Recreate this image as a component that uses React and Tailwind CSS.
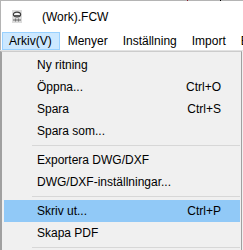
import React from "react";

const Item = ({ label, shortcut, active }) => (
  <div
    className={`h-[22px] flex items-center justify-between pl-[33px] pr-[19px] ${
      active ? "bg-[#91c9f7]" : ""
    }`}
  >
    <span>{label}</span>
    {shortcut && <span>{shortcut}</span>}
  </div>
);

const Sep = () => (
  <div className="h-[7px] flex items-center pl-[28px]">
    <div className="h-px w-full bg-[#d7d7d7]" />
  </div>
);

export default function App() {
  return (
    <div
      className="relative w-[243px] h-[250px] overflow-hidden bg-[#f0f0f0] text-[12px] text-black"
      style={{ fontFamily: '"Liberation Sans", Arial, sans-serif' }}
    >
      {/* top edge */}
      <div className="h-px bg-[#b4b4b4] relative">
        <div className="absolute left-[187px] top-0 w-px h-px bg-[#8b1a2a]" />
        <div className="absolute left-[220px] top-0 w-px h-px bg-black" />
      </div>
      {/* title bar */}
      <div className="h-[30px] bg-white flex items-center border-l border-[#b4b4b4]">
        <svg width="10" height="13" viewBox="0 0 10 13" className="ml-[11px] mt-[1px]">
          <rect x="0" y="0" width="10" height="13" fill="#dcdcdc" />
          <ellipse cx="5" cy="4.5" rx="3.6" ry="2.4" fill="#f4f4f4" stroke="#3a3a3a" strokeWidth="1.2" />
          <rect x="2" y="5" width="6" height="1.5" fill="#555" />
          <line x1="1" y1="10" x2="9" y2="10" stroke="#666" strokeWidth="1" />
          <line x1="3.5" y1="8.5" x2="3.5" y2="11.5" stroke="#777" strokeWidth="1" />
          <line x1="6.5" y1="8.5" x2="6.5" y2="11.5" stroke="#777" strokeWidth="1" />
        </svg>
        <span className="ml-[20px] text-[12px] leading-none mt-[2px]">(Work).FCW</span>
      </div>
      {/* menu bar */}
      <div className="h-[19px] bg-white flex items-start border-l border-[#b4b4b4] whitespace-nowrap">
        <div className="ml-px mt-px h-[18px] pl-[6px] pr-[7px] flex items-center bg-[#cce8ff] border border-[#99d1ff]">
          Arkiv(V)
        </div>
        <div className="h-[19px] px-[8px] flex items-center">Menyer</div>
        <div className="h-[19px] px-[7px] flex items-center">Inställning</div>
        <div className="h-[19px] px-[8px] flex items-center">Import</div>
        <div className="h-[19px] px-[7px] flex items-center">E</div>
      </div>
      <div className="h-px bg-[#e3e3e3]" />
      {/* dropdown */}
      <div className="absolute left-0 top-[51px] w-[242px] h-[210px] bg-[#f0f0f0] border-l-2 border-r border-t border-[#a0a0a0] border-t-[#cccccc] pt-[2px] pl-[2px] pr-px whitespace-nowrap">
        <Item label="Ny ritning" />
        <Item label="Öppna..." shortcut="Ctrl+O" />
        <Item label="Spara" shortcut="Ctrl+S" />
        <Item label="Spara som..." />
        <Sep />
        <Item label="Exportera DWG/DXF" />
        <Item label="DWG/DXF-inställningar..." />
        <Sep />
        <Item label="Skriv ut..." shortcut="Ctrl+P" active />
        <Item label="Skapa PDF" />
        <Sep />
      </div>
    </div>
  );
}
